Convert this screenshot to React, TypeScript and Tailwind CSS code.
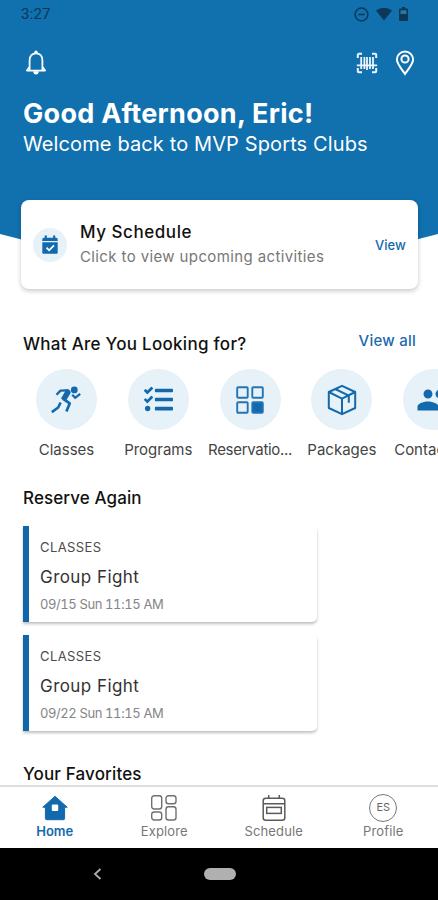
import type { ReactNode } from "react";
import { FaTasks } from "react-icons/fa";
import { MdPeople } from "react-icons/md";

const reservations = [
  { id: 1, type: "CLASSES", name: "Group Fight", date: "09/15 Sun 11:15 AM" },
  { id: 2, type: "CLASSES", name: "Group Fight", date: "09/22 Sun 11:15 AM" },
];

const BellIcon = () => (
  <svg width="22" height="26" viewBox="0 0 22 26" fill="none" stroke="white">
    <path d="M4.600 20V10.200C4.600 6 7.200 3.300 11 3.300s6.400 2.700 6.400 6.900V20" strokeWidth="1.800" />
    <path d="M4.200 17.300 1.900 20.600h18.200l-2.300-3.300" strokeWidth="1.700" strokeLinejoin="round" />
    <circle cx="11" cy="2.200" r="1.700" fill="white" stroke="none" />
    <path d="M8.300 21.300h5.400a2.700 3.200 0 0 1-5.400 0Z" fill="white" stroke="none" />
  </svg>
);

const BarcodeIcon = () => (
  <svg width="22" height="22" viewBox="0 0 22 22" fill="none" stroke="#eef5fb">
    <path
      d="M1.800 6V2.800a1 1 0 0 1 1-1H6M16 1.800h3.200a1 1 0 0 1 1 1V6M20.200 16v3.200a1 1 0 0 1-1 1H16M6 20.200H2.800a1 1 0 0 1-1-1V16"
      strokeWidth="2"
    />
    <path d="M5.200 5v12M8.400 5v12M11 5v13M14 5v12M17 5v12" strokeWidth="1.800" />
    <path d="M0.800 13.300h20.400" strokeWidth="1.700" />
  </svg>
);

const PinIcon = () => (
  <svg width="20" height="26" viewBox="0 0 20 26" fill="none" stroke="white" strokeWidth="2">
    <path d="M10 24C7 19.600 1.900 14 1.900 9.600a8.100 8.100 0 0 1 16.200 0C18.100 14 13 19.600 10 24Z" />
    <circle cx="10" cy="9" r="3.600" />
  </svg>
);

const CalendarCheckIcon = () => (
  <svg width="16" height="19" viewBox="0 0 16 19" fill="#1269ad">
    <path d="M0.300 6V4.500q0-1.700 1.600-1.700H2.700V1.400a1.100 1.100 0 0 1 2.200 0v1.400h6.200V1.400a1.100 1.100 0 0 1 2.200 0v1.400h.8q1.600 0 1.600 1.700V6Z" />
    <path d="M0.300 7.200h15.400v10.300q0 1.200-1.200 1.200h-13q-1.200 0-1.200-1.200Z" />
    <path d="m4.500 12.700 2.600 2.600 4.900-5" fill="none" stroke="white" strokeWidth="1.800" />
  </svg>
);

const RunnerIcon = () => (
  <svg width="32" height="30" viewBox="0 0 32 30" fill="none" stroke="#1269ad">
    <circle cx="24.300" cy="4.900" r="3.400" fill="#1269ad" stroke="none" />
    <path d="m6.500 9.800 4-4.200 8.300-.2" strokeWidth="2.300" strokeLinejoin="round" />
    <path d="M14.600 4.400h3.200q3.400.6 2.800 3.600l-4.300 7.300-5.400-1.500 4.300-7.500Z" fill="#1269ad" stroke="none" />
    <path d="m12.800 13.600 6.900 4.800-3.300 8.200" strokeWidth="2.700" strokeLinejoin="round" />
    <path d="m10.600 17.500-2.400 5-6.400 4.600" strokeWidth="2.600" strokeLinejoin="round" />
    <path d="m22.200 9.800 3 3 5-4" strokeWidth="2.300" />
  </svg>
);

const GridIcon = () => (
  <svg width="28" height="28" viewBox="0 0 28 28" fill="none" stroke="#2474b3" strokeWidth="1.900">
    <rect x="1.200" y="1.200" width="10.500" height="10.500" rx="1" />
    <rect x="16.300" y="1.200" width="10.500" height="10.500" rx="1" />
    <rect x="1.200" y="16.300" width="10.500" height="10.500" rx="1" />
    <rect x="16.300" y="16.300" width="10.500" height="10.500" rx="1" fill="#1269ad" />
  </svg>
);

const PackageIcon = () => (
  <svg width="30" height="32" viewBox="0 0 30 32" fill="none" stroke="#1269ad" strokeWidth="2" strokeLinejoin="round">
    <path d="M15 1.800 28.200 8v16L15 30.200 1.800 24V8Z" />
    <path d="M1.800 8 15 14.600 28.200 8M15 14.600v15.600M8.200 5l13.600 6.600v7.200" />
  </svg>
);

const HomeIcon = () => (
  <svg width="28" height="26" viewBox="0 0 28 26">
    <path
      d="M14 1.300 26.200 12.200h-2.600v11.300q0 1.200-1.200 1.200H5.600q-1.200 0-1.200-1.200V12.200H1.800Z"
      fill="#1269ad"
      stroke="#1269ad"
      strokeLinejoin="round"
    />
    <rect x="10.800" y="9.600" width="6.400" height="6.400" rx="1" fill="white" />
  </svg>
);

const ExploreIcon = () => (
  <svg width="28" height="28" viewBox="0 0 28 28" fill="none" stroke="#707070" strokeWidth="1.400">
    <rect x="1.700" y="1.700" width="10" height="13.300" rx="2.500" />
    <rect x="16" y="1.700" width="10" height="8" rx="2.500" />
    <rect x="1.700" y="18" width="10" height="8" rx="2.500" />
    <rect x="16" y="12.700" width="10" height="13.300" rx="2.500" />
  </svg>
);

const ScheduleIcon = () => (
  <svg width="24" height="28" viewBox="0 0 24 28" fill="none" stroke="#5a5a5a" strokeWidth="1.500">
    <rect x="1.200" y="4.300" width="21.600" height="22" rx="2.500" />
    <path d="M1.200 9.800h21.600M6.700 1v4M17.300 1v4" />
    <rect x="4.700" y="13.400" width="14.600" height="6" />
  </svg>
);

const categories = [
  { name: "Classes", icon: <RunnerIcon /> },
  { name: "Programs", icon: <FaTasks size={29} /> },
  { name: "Reservatio...", icon: <GridIcon />, tight: true },
  { name: "Packages", icon: <PackageIcon /> },
  { name: "Contact Us", icon: <MdPeople size={36} /> },
];

function NavItem({ label, icon, active }: { label: string; icon: ReactNode; active?: boolean }) {
  return (
    <a href="#" className="flex flex-1 flex-col items-center pt-1.5">
      <span className="flex h-[29px] items-center justify-center">{icon}</span>
      <span
        className={
          active
            ? "mt-px text-[13px] leading-[17px] font-semibold text-[#1269ad]"
            : "mt-px text-[13px] leading-[17px] tracking-[0.15px] text-[#777]"
        }
      >
        {label}
      </span>
    </a>
  );
}

export default function App() {
  return (
    <div className="flex h-[900px] w-[438px] flex-col overflow-hidden bg-white font-['Inter',sans-serif] whitespace-nowrap text-[#111]">
      <main className="min-h-0 flex-1 overflow-hidden">
        <header className="h-[280px] bg-[#1170ae] text-white [clip-path:polygon(0_0,100%_0,100%_234px,50%_290px,0_234px)]">
          <div className="flex h-7 items-center justify-between pr-[30px] pl-[21px] text-[#0b3858]">
            <span className="font-['Roboto',sans-serif] text-[15px] tracking-[0.2px]">3:27</span>
            <div className="flex items-center">
              <svg width="15" height="15" viewBox="0 0 15 15" fill="none" stroke="currentColor" strokeWidth="1.500">
                <circle cx="7.500" cy="7.500" r="6.400" />
                <path d="M4.300 7.500h6.400" />
              </svg>
              <svg className="ml-[7px]" width="16" height="14" viewBox="0 0 16 14" fill="currentColor">
                <path d="M0 3.500Q8-2 16 3.500L8 13.500Z" />
              </svg>
              <svg className="ml-[7px]" width="9" height="14" viewBox="0 0 9 14">
                <path d="M3 0h3v1.500h2q1 0 1 1V13q0 1-1 1H1q-1 0-1-1V2.500q0-1 1-1h2Z" fill="currentColor" />
                <path d="M1.500 3.200h6V7h-6Z" fill="#2b76a6" />
              </svg>
            </div>
          </div>
          <div className="mt-[21px] flex h-[27px] items-center justify-between pr-[23px] pl-[25px]">
            <BellIcon />
            <div className="flex items-center gap-[17px]">
              <BarcodeIcon />
              <PinIcon />
            </div>
          </div>
          <h1 className="mt-[22px] ml-[23px] text-[27px] leading-8 font-bold tracking-[0.28px]">Good Afternoon, Eric!</h1>
          <p className="ml-[23px] text-[20px] leading-7 tracking-[0.12px]">Welcome back to MVP Sports Clubs</p>
        </header>

        <section className="relative mx-[21px] -mt-20 flex h-[89px] w-[397px] items-center rounded-lg bg-white pr-3 pl-3 shadow-[0_2px_5px_rgba(0,0,0,0.22)]">
          <span className="flex size-[34px] items-center justify-center rounded-full bg-[#e6f1f8]">
            <CalendarCheckIcon />
          </span>
          <div className="ml-[13px] flex-1">
            <h2 className="text-[17px] leading-6 font-medium tracking-[0.55px]">My Schedule</h2>
            <p className="mt-px text-[15px] leading-6 tracking-[0.38px] text-[#777]">Click to view upcoming activities</p>
          </div>
          <a href="#" className="mt-0.5 text-[13px] font-medium tracking-[0.1px] text-[#1269ad]">View</a>
        </section>

        <div className="mt-[41px] flex h-[26px] items-start justify-between pr-[22px] pl-[23px]">
          <h2 className="mt-0.5 text-[17px] leading-6 font-medium tracking-[0.28px]">What Are You Looking for?</h2>
          <a href="#" className="-mt-px text-[15px] leading-6 font-medium tracking-[0.25px] text-[#2069aa]">View all</a>
        </div>

        <div className="mt-[13px] ml-[20.6px] flex text-[#1269ad]">
          {categories.map((item) => (
            <div key={item.name} className="flex w-[91.8px] shrink-0 flex-col items-center">
              <span className="flex size-[61px] items-center justify-center rounded-full bg-[#e6f1f8]">{item.icon}</span>
              <span
                className={
                  item.tight
                    ? "mt-[9px] text-[15px] leading-[22px] tracking-[-0.3px] text-[#444]"
                    : "mt-[9px] text-[15px] leading-[22px] text-[#444]"
                }
              >
                {item.name}
              </span>
            </div>
          ))}
        </div>

        <h2 className="mt-[25px] ml-[23px] text-[17px] leading-6 font-medium tracking-[0.1px]">Reserve Again</h2>
        <div className="mt-4 ml-[23px] flex w-[294px] flex-col gap-[13px]">
          {reservations.map((item) => (
            <article
              key={item.id}
              className="h-24 rounded-r-[5px] border-l-[6px] border-[#0f66a9] bg-white pt-3 pl-[11px] shadow-[0_2px_3px_rgba(0,0,0,0.25)]"
            >
              <p className="text-[13px] leading-[18px] tracking-[0.4px] text-[#4c4c4c]">{item.type}</p>
              <h3 className="mt-[9px] text-[17px] leading-6 tracking-[0.45px] text-[#333]">{item.name}</h3>
              <p className="mt-[6px] text-[13px] leading-[18px] tracking-[-0.4px] text-[#858585] tabular-nums">{item.date}</p>
            </article>
          ))}
        </div>
        <h2 className="mt-[31px] ml-[23px] text-[17px] leading-6 font-medium tracking-[0.15px]">Your Favorites</h2>
      </main>

      <nav className="flex h-[63px] shrink-0 border-t-2 border-[#dedede] bg-white">
        <NavItem label="Home" icon={<HomeIcon />} active />
        <NavItem label="Explore" icon={<ExploreIcon />} />
        <NavItem label="Schedule" icon={<ScheduleIcon />} />
        <NavItem
          label="Profile"
          icon={
            <span className="flex size-7 items-center justify-center rounded-full border border-[#777] text-[11px] text-[#666]">
              ES
            </span>
          }
        />
      </nav>
      <div className="flex h-[52px] shrink-0 items-center bg-black pl-[93px]">
        <svg width="9" height="12" viewBox="0 0 9 12" fill="none" stroke="#aaa" strokeWidth="1.900">
          <path d="M7.500 1 2 6l5.500 5" />
        </svg>
        <span className="ml-[102px] h-3 w-8 rounded-full bg-[#b0b0b0]" />
      </div>
    </div>
  );
}
